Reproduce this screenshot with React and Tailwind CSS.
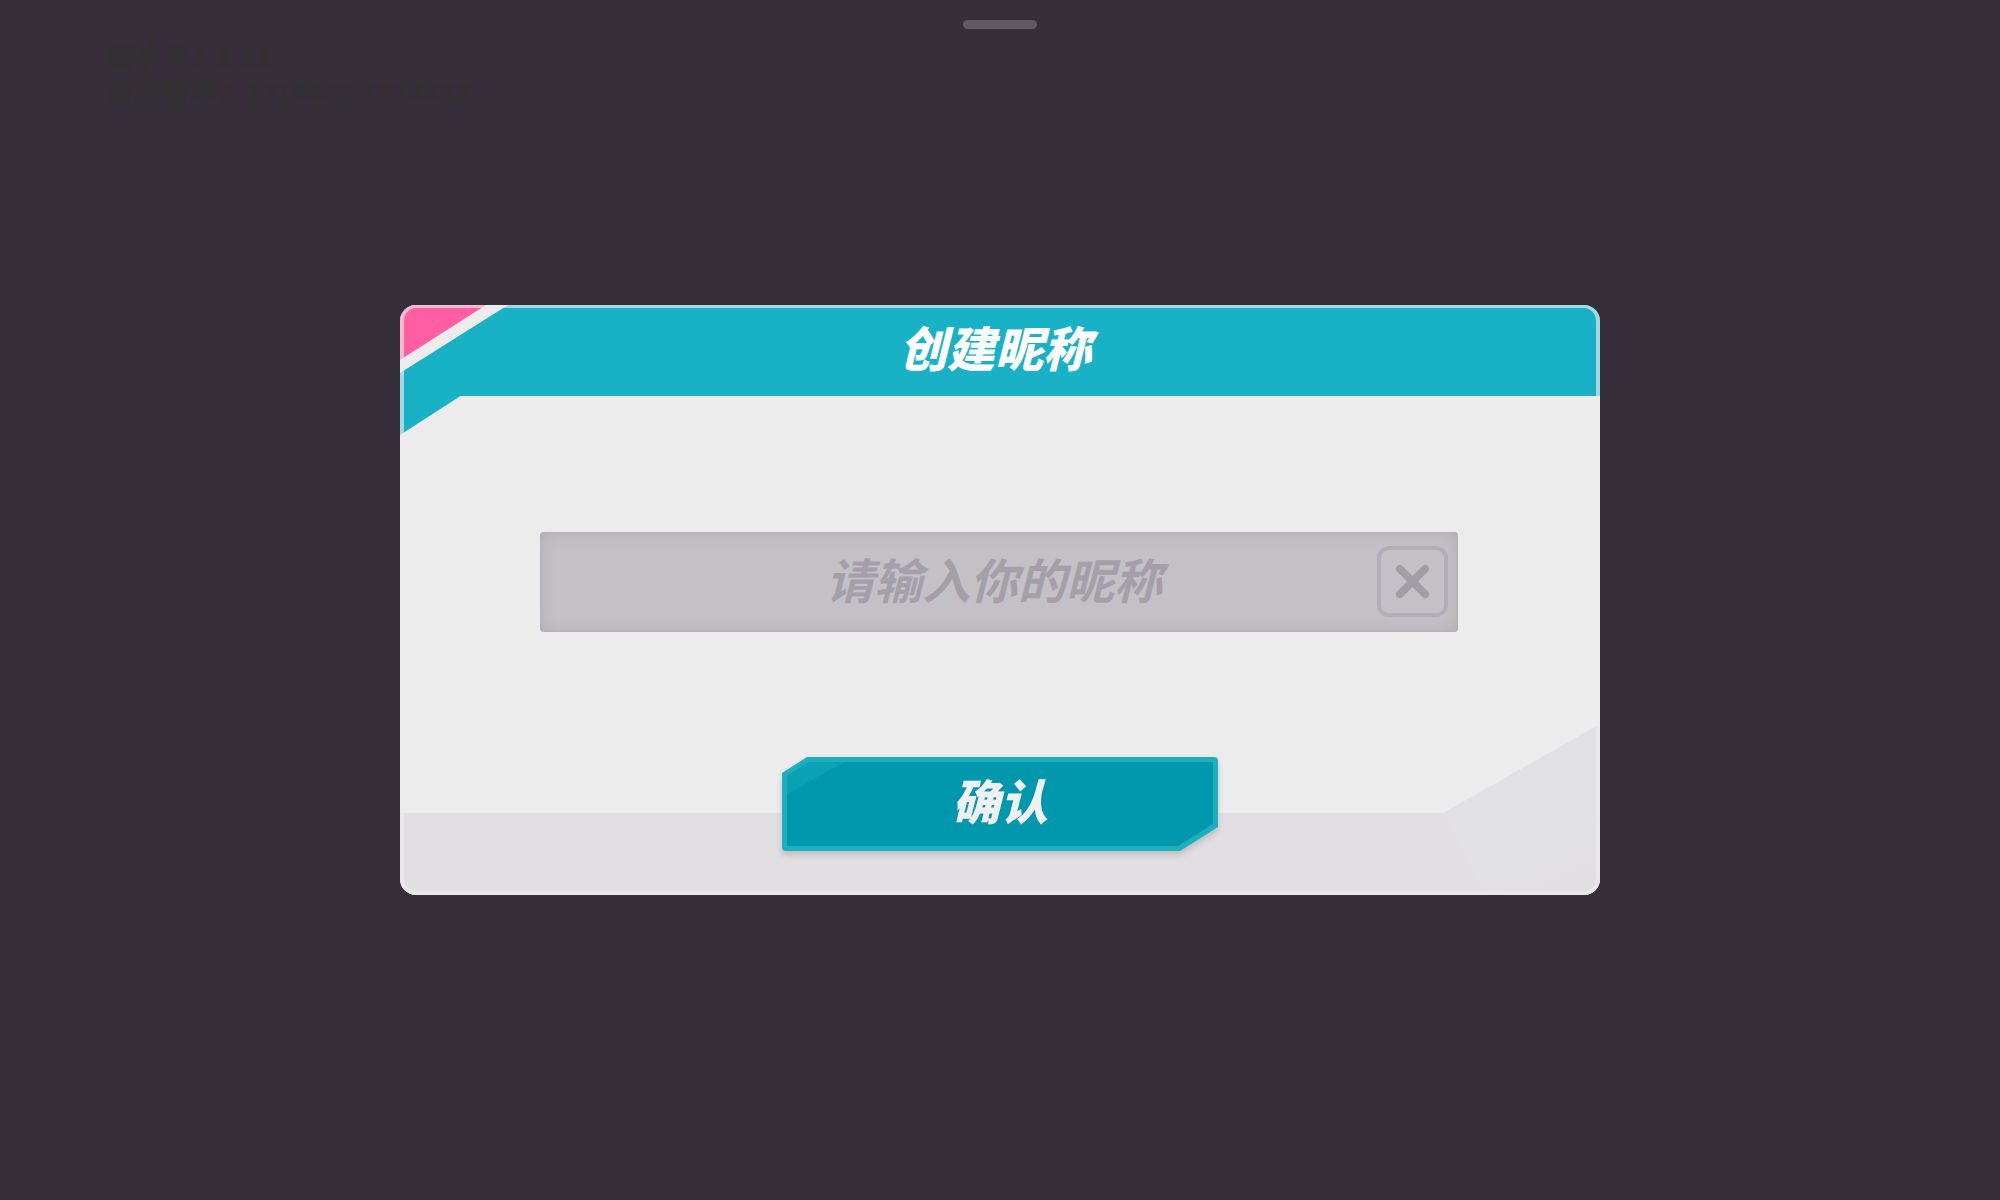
import { useState } from 'react'

const versions = [
  { label: '版本号', value: '1.31' },
  { label: '资源版本', value: '1314432.1314432' },
]

// Pink and teal cut in the top left corner of the dialog
function CornerRibbon() {
  return (
    <svg className="absolute top-0 left-0" width="110" height="132" viewBox="0 0 110 132" aria-hidden="true">
      <path d="M0 90H62L0 130Z" fill="#19b1c5" />
      <path d="M0 0H108L0 68Z" fill="#ececec" />
      <path d="M0 0H86L0 55Z" fill="#ff5fa2" />
    </svg>
  )
}

// Grey slope that rises from the footer to the right edge
function FooterSlope() {
  return (
    <svg className="absolute bottom-0 right-0" width="157" height="171" viewBox="0 0 157 171" aria-hidden="true">
      <defs>
        <linearGradient id="slope" x1="0.4" y1="0.3" x2="0.7" y2="1">
          <stop offset="0.3" stopColor="#e1e1e3" />
          <stop offset="1" stopColor="#e1dfe1" />
        </linearGradient>
      </defs>
      <path d="M0 89L157 0V171H42Z" fill="url(#slope)" />
    </svg>
  )
}

function NicknameDialog() {
  const [name, setName] = useState('')

  return (
    <form
      role="dialog"
      aria-labelledby="dialog-title"
      onSubmit={e => e.preventDefault()}
      className="relative isolate w-3/5 rounded-[16px] overflow-hidden bg-[#ececec]"
    >
      <header className="flex items-center justify-center h-[91px] pr-[10px] bg-[#19b1c5]">
        <h1 id="dialog-title" className="text-[48px] leading-none font-black italic text-white">创建昵称</h1>
      </header>

      {/* Decoration */}
      <div className="absolute inset-0 -z-10">
        <div className="absolute inset-x-0 bottom-0 h-[82px] bg-[#e1dfe1]" />
        <FooterSlope />
      </div>
      <CornerRibbon />
      <div className="absolute inset-0 rounded-[16px] border-4 border-[#ececec]/65 border-t-[3px] pointer-events-none" />

      <div className="pl-[140px] pr-[142px] pt-[136px]">
        <div className="relative">
          <input
            type="text"
            aria-label="昵称"
            placeholder="请输入你的昵称"
            value={name}
            onChange={e => setName(e.target.value)}
            className="block w-full h-[100px] pr-[10px] rounded-[4px] bg-[#c3c0c6] text-center text-[48px] leading-none font-bold italic text-[#6f6a73] placeholder:text-[#a5a0a8] outline-none shadow-[inset_0_0_16px_#aeacb0,inset_0_0_2px_#aeacb0]"
          />
          <button
            type="button"
            aria-label="清除"
            onClick={() => setName('')}
            className="absolute right-[10px] top-[14px] flex items-center justify-center size-[71px] rounded-[12px] border-4 border-[#b1aeb8] bg-[#c3c0c6]"
          >
            <svg width="35" height="35" viewBox="0 0 36 36" fill="none" stroke="#a19ea5" strokeWidth="8" strokeLinecap="round">
              <path d="M5 5L31 31M31 5L5 31" />
            </svg>
          </button>
        </div>
      </div>

      <div className="flex justify-center pt-[125px] pb-[44px] drop-shadow-[0_4px_3px_rgba(60,50,60,0.2)]">
        <button
          type="submit"
          className="relative w-[436px] h-[94px] rounded-[4px] bg-[#1cafc0] text-[48px] leading-none font-black italic text-[#f0f0f0] [clip-path:polygon(25px_0,100%_0,100%_70px,398px_100%,0_100%,0_16px)]"
        >
          <span className="absolute inset-[5px] bg-[#0197ac] [clip-path:polygon(22px_0,100%_0,100%_62px,391px_100%,0_100%,0_14px)]" />
          <span className="absolute top-[5px] left-[5px] w-[58px] h-[32px] bg-[#0aa1b4] [clip-path:polygon(22px_0,100%_0,0_100%,0_14px)]" />
          <span className="relative">确认</span>
        </button>
      </div>
    </form>
  )
}

export default function App() {
  return (
    <div className="min-h-screen bg-[#362e39] font-['Liberation_Sans','Noto_Sans_CJK_SC',sans-serif]">
      <div className="px-[104px] pt-[40px]">
        {versions.map(({ label, value }) => (
          <p key={label} className="text-[28px] leading-[35px] font-bold italic text-[#333032]">{label}：{value}</p>
        ))}
      </div>

      <div className="fixed inset-0 flex items-center justify-center">
        <NicknameDialog />
      </div>

      {/* Drag handle */}
      <div className="fixed top-[20px] inset-x-0 flex justify-center">
        <div className="w-[74px] h-[9px] rounded-full bg-[#60595f]" />
      </div>
    </div>
  )
}
